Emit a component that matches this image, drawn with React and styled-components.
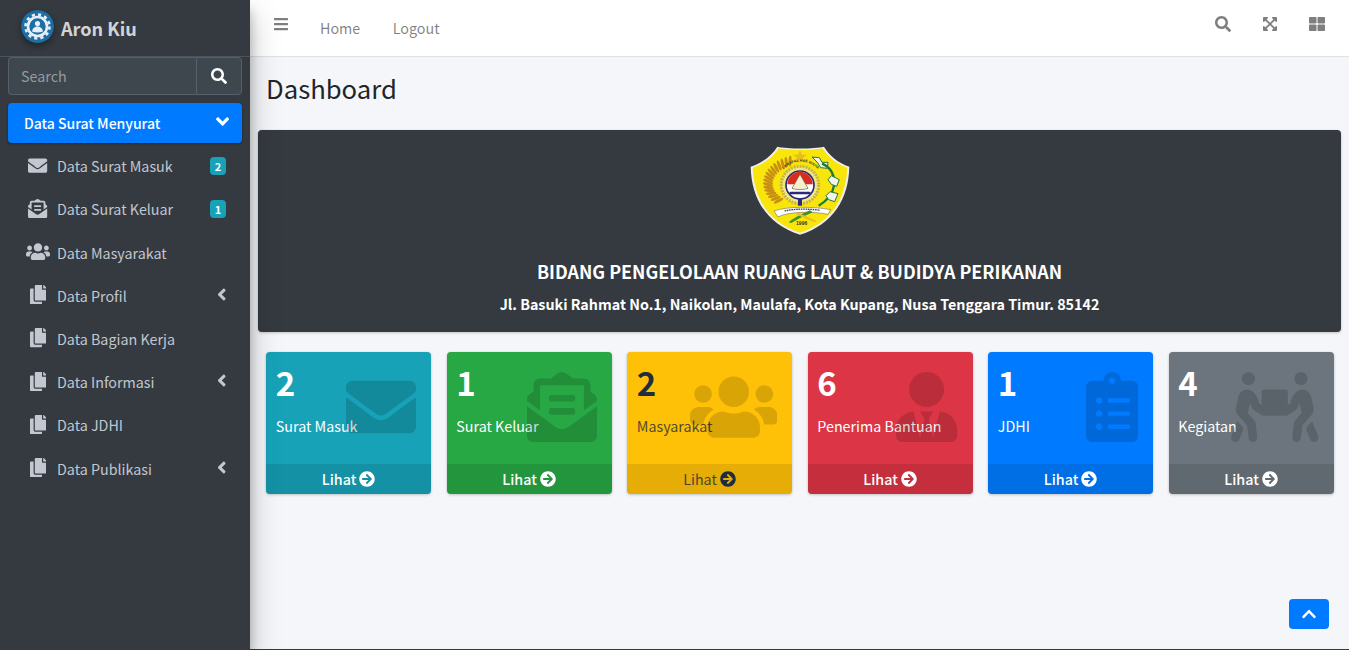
import React from 'react';
import styled, { createGlobalStyle } from 'styled-components';
import {
  FaEnvelope, FaEnvelopeOpenText, FaUsers, FaCopy, FaUserTie, FaClipboardList,
  FaPeopleCarry, FaArrowCircleRight, FaAngleLeft, FaAngleDown, FaExpandArrowsAlt,
  FaThLarge, FaBars, FaSearch, FaChevronUp,
} from 'react-icons/fa';

const FONT = '"Noto Sans CJK SC", "Noto Sans", sans-serif';

const Global = createGlobalStyle`
  * { box-sizing: border-box; }
  html, body { margin: 0; padding: 0; height: 100%; overflow: hidden; }
  body { font-family: ${FONT}; font-size: 14.3px; line-height: 24px; background: #f4f6f9; color: #212529; }
  svg[viewBox="0 0 640 512"] { width: 1.25em; }
  svg[viewBox="0 0 448 512"] { width: .875em; }
  svg[viewBox="0 0 384 512"] { width: .75em; }
  svg[viewBox="0 0 320 512"] { width: .625em; }
  svg[viewBox="0 0 256 512"] { width: .5em; }
`;

const Shell = styled.div`
  display: flex;
  height: 650px;
  width: 1349px;
  overflow: hidden;
`;

const Sidebar = styled.aside`
  flex: 0 0 250px;
  width: 250px;
  min-width: 0;
  background: #343a40;
  position: relative;
  z-index: 2;
  box-shadow: 0 14px 28px rgba(0,0,0,.25), 0 10px 10px rgba(0,0,0,.22);
`;

const Brand = styled.div`
  display: flex;
  align-items: center;
  height: 57px;
  padding: 0 0 4px 21px;
  gap: 7px;
  border-bottom: 1px solid #4b545c;
`;

const BrandText = styled.span`
  font-size: 18.1px;
  font-weight: 700;
  color: rgba(255,255,255,.8);
  line-height: 28px;
  margin-top: 3px;
`;

const LogoBadge = styled.svg`
  width: 33px;
  height: 33px;
  border-radius: 50%;
  box-shadow: 0 3px 6px rgba(0,0,0,.16), 0 3px 6px rgba(0,0,0,.23);
`;

const SearchRow = styled.form`
  display: flex;
  margin: 0 8px 8px;
  height: 38px;
`;

const SearchInput = styled.input`
  flex: 1;
  width: 100px;
  min-width: 0;
  background: #3f474e;
  border: 1px solid #56606a;
  border-right: 0;
  border-radius: 4px 0 0 4px;
  padding: 0 12px;
  font: 14.3px/24px ${FONT};
  color: #fff;
  outline: 0;
  &::placeholder { color: #939ba2; opacity: 1; }
`;

const SearchButton = styled.button`
  flex: 0 0 46px;
  display: flex;
  align-items: center;
  justify-content: center;
  padding: 0;
  background: #3f474e;
  border: 1px solid #56606a;
  border-radius: 0 4px 4px 0;
  color: #fff;
  font-size: 16px;
`;

const Nav = styled.nav`
  display: flex;
  flex-direction: column;
  gap: 3.2px;
  padding: 0 8px;
`;

const NavHead = styled.div`
  display: flex;
  align-items: center;
  justify-content: space-between;
  height: 40px;
  padding: 0 13px 0 16px;
  border-radius: 4px;
  background: #007bff;
  color: #fff;
  font-size: 14px;
  font-weight: 500;
  box-shadow: 0 1px 3px rgba(0,0,0,.12), 0 1px 2px rgba(0,0,0,.24);
  svg { font-size: 21px; height: 21px; margin-top: -4px; }
`;

const NavItem = styled.a`
  display: grid;
  grid-template-columns: 26px 1fr auto;
  column-gap: 6px;
  align-items: center;
  height: 40px;
  padding: 0 16px 0 17px;
  color: #c2c7d0;
`;

const NavIcon = styled.span`
  display: flex;
  justify-content: center;
  align-items: center;
  font-size: 19.2px;
  height: 24px;
  margin-top: -2px;
`;

const Badge = styled.span`
  background: #17a2b8;
  color: #fff;
  font-size: 11px;
  font-weight: 700;
  line-height: 18px;
  width: 16px;
  height: 18px;
  border-radius: 4px;
  text-align: center;
  margin-top: -1px;
`;

const Caret = styled.span`
  display: flex;
  font-size: 19px;
  margin-top: -3px;
`;

const Main = styled.div`
  flex: 1;
  min-width: 0;
  display: flex;
  flex-direction: column;
  border-bottom: 1px solid #343a40;
`;

const Topbar = styled.header`
  display: flex;
  align-items: center;
  height: 57px;
  flex: 0 0 57px;
  background: #fff;
  border-bottom: 1px solid #dee2e6;
  padding: 0 9px 0 24px;
`;

const TopIcon = styled.span`
  display: flex;
  justify-content: center;
  width: 47px;
  font-size: 16px;
  color: rgba(0,0,0,.5);
  margin-top: -9px;
`;

const MenuIcon = styled(TopIcon)`
  width: 14px;
  margin-right: 32px;
`;

const TopLink = styled.a`
  color: rgba(0,0,0,.5);
  margin-right: 32.5px;
`;

const Spacer = styled.div`
  flex: 1;
`;

const Content = styled.main`
  flex: 1;
  padding: 0 8px;
`;

const PageTitle = styled.h1`
  margin: 0;
  padding: 14px 8px 0;
  height: 73px;
  font-size: 25.7px;
  line-height: 34px;
  font-weight: 400;
  color: #212529;
`;

const Banner = styled.section`
  height: 202px;
  background: #343a40;
  border-radius: 4px;
  color: #fff;
  display: flex;
  flex-direction: column;
  align-items: center;
  padding-top: 15px;
  box-shadow: 0 0 1px rgba(0,0,0,.13), 0 1px 3px rgba(0,0,0,.2);
`;

const BannerTitle = styled.div`
  margin-top: 21px;
  font-size: 17.87px;
  line-height: 30px;
  font-weight: 700;
`;

const BannerAddress = styled.div`
  margin-top: 3px;
  font-size: 14.3px;
  line-height: 30px;
  font-weight: 700;
`;

const Seal = styled.svg`
  width: 100px;
  height: 90px;
  display: block;
`;

const Grid = styled.div`
  display: grid;
  grid-template-columns: repeat(6, 1fr);
  margin-top: 20px;
`;

const Col = styled.div`
  padding: 0 7.5px 0 8px;
  min-width: 0;
`;

const Box = styled.div`
  position: relative;
  height: 142px;
  display: flex;
  flex-direction: column;
  border-radius: 4px;
  overflow: hidden;
  background: ${p => p.$bg};
  color: ${p => p.$fg};
  box-shadow: 0 0 1px rgba(0,0,0,.13), 0 1px 3px rgba(0,0,0,.2);
`;

const BoxInner = styled.div`
  flex: 1;
  padding: 9px 10px 10px 9.8px;
`;

const BoxValue = styled.h3`
  margin: 0 0 11px;
  font-size: 33px;
  line-height: 42px;
  font-weight: 700;
`;

const BoxLabel = styled.p`
  margin: 0;
  opacity: ${p => p.$dim ? .8 : 1};
  line-height: 24px;
`;

const BoxIcon = styled.span`
  position: absolute;
  top: 20px;
  right: 15px;
  display: flex;
  font-size: 70px;
  color: rgba(0,0,0,.15);
`;

const BoxFooter = styled.a`
  flex: 0 0 30px;
  display: flex;
  align-items: center;
  justify-content: center;
  gap: 3px;
  background: rgba(0,0,0,.1);
  color: ${p => p.$fg};
  svg { font-size: 16px; }
`;

const FooterLabel = styled.span`
  opacity: ${p => p.$dim ? .8 : 1};
  font-weight: ${p => p.$dim ? 400 : 500};
`;

const ScrollTop = styled.button`
  position: fixed;
  right: 20px;
  bottom: 21px;
  width: 40px;
  height: 30px;
  display: flex;
  align-items: center;
  justify-content: center;
  padding: 0;
  border: 0;
  border-radius: 4px;
  background: #007bff;
  color: #fff;
  font-size: 16px;
`;

const items = [
  { label: 'Data Surat Masuk', icon: <FaEnvelope />, badge: '2' },
  { label: 'Data Surat Keluar', icon: <FaEnvelopeOpenText />, badge: '1' },
  { label: 'Data Masyarakat', icon: <FaUsers /> },
  { label: 'Data Profil', icon: <FaCopy />, caret: true },
  { label: 'Data Bagian Kerja', icon: <FaCopy /> },
  { label: 'Data Informasi', icon: <FaCopy />, caret: true },
  { label: 'Data JDHI', icon: <FaCopy /> },
  { label: 'Data Publikasi', icon: <FaCopy />, caret: true },
];

const boxes = [
  { value: '2', label: 'Surat Masuk', bg: '#17a2b8', fg: '#fff', icon: <FaEnvelope /> },
  { value: '1', label: 'Surat Keluar', bg: '#28a745', fg: '#fff', icon: <FaEnvelopeOpenText /> },
  { value: '2', label: 'Masyarakat', bg: '#ffc107', fg: '#1f2d3d', icon: <FaUsers />, dim: true },
  { value: '6', label: 'Penerima Bantuan', bg: '#dc3545', fg: '#fff', icon: <FaUserTie /> },
  { value: '1', label: 'JDHI', bg: '#007bff', fg: '#fff', icon: <FaClipboardList /> },
  { value: '4', label: 'Kegiatan', bg: '#6c757d', fg: '#fff', icon: <FaPeopleCarry /> },
];

const wheat = Array.from({ length: 17 }, (_, i) => {
  const deg = -108 - (i / 16) * 120;
  const a = (deg * Math.PI) / 180;
  return { x: 300 + 96 * Math.cos(a), y: 145 + 70 * Math.sin(a), deg };
});

const AppLogo = () => (
  <LogoBadge viewBox="0 0 33 33">
    <circle cx="16.5" cy="16.5" r="16.5" fill="#1c6ea4" />
    <g fill="none" stroke="#e8eef4">
      <circle cx="16.5" cy="16.5" r="9.5" strokeWidth="2.6" />
      <circle cx="16.5" cy="16.5" r="12" strokeWidth="2.6" strokeDasharray="3.2 3.1" />
    </g>
    <circle cx="16.5" cy="13.6" r="2.6" fill="#e8eef4" />
    <path d="M11 21.5c.6-3.6 3-5 5.5-5s4.900 1.400 5.500 5c-3.400 1.200-7.600 1.200-11 0z" fill="#e8eef4" />
  </LogoBadge>
);

const SealLogo = () => (
  <Seal viewBox="150 30 300 270">
    <defs>
      <path id="seal-arc" d="M232 150a70 70 0 0 1 140 0" />
    </defs>
    <path d="M232 35C262 42 342 42 372 35C388 62 415 84 448 95C446 190 400 268 300 299C200 268 154 190 152 95C185 84 216 62 232 35z" fill="#f0f0ea" />
    <path d="M236 40C265 47 339 47 368 40C384 66 410 88 442 98C438 188 396 262 300 293C204 262 162 188 158 98C190 88 220 66 236 40z" fill="#f8e50c" />
    <path d="M300 46l6 13h15l-12 10 5 15-14-9-14 9 5-15-12-10h15z" fill="#e9bd22" />
    {wheat.map((w, i) => (
      <ellipse key={i} cx={w.x} cy={w.y} rx="16" ry="4.500" fill="#c88f14" transform={`rotate(${w.deg + 20} ${w.x} ${w.y})`} />
    ))}
    <circle cx="300" cy="150" r="56" fill="#f2e880" stroke="#c9b04a" strokeWidth="9" strokeDasharray="6 3" />
    <text fontSize="11" fontWeight="700" fill="#3a3a2a" fontFamily="Liberation Sans, sans-serif" textAnchor="middle">
      <textPath href="#seal-arc" startOffset="50%">LAMAFAL HAE BISHA</textPath>
    </text>
    <circle cx="300" cy="150" r="42" fill="#fff" stroke="#2b2a78" strokeWidth="5" />
    <path d="M262 148a38 38 0 0 1 76 0z" fill="#d92b1e" />
    <path d="M300 118l24 42c-12 5-36 5-48 0z" fill="#f7f0d0" stroke="#6b5a24" strokeWidth="2" />
    <rect x="268" y="170" width="64" height="8" rx="4" fill="#2b2a78" />
    <rect x="294" y="190" width="12" height="22" fill="#2b2a78" />
    <path d="M336 66l22 2 8 14 18 0-2 18-20-2-10-16z" fill="#f4f4ee" stroke="#1d7a37" strokeWidth="3" />
    <path d="M366 86c26 10 40 36 36 66-4 26-22 46-46 60" fill="none" stroke="#1d7a37" strokeWidth="7" />
    <path d="M394 122l24 12-8 20-16-6-10-14z" fill="#f4f4ee" stroke="#1d7a37" strokeWidth="3" />
    <path d="M390 170l24 6-10 24-18-6-8-12z" fill="#f4f4ee" stroke="#1d7a37" strokeWidth="3" />
    <path d="M222 228C260 214 340 214 392 224L384 238C340 228 262 230 234 246z" fill="#fff" stroke="#555" strokeWidth="1.5" />
    <path d="M254 228C280 221 330 221 360 226" fill="none" stroke="#444" strokeWidth="4" strokeDasharray="5 2" />
    <path d="M266 262C288 244 312 234 330 226L338 232C320 240 296 250 274 264z" fill="#3f8f2c" />
    <path d="M296 234L350 258L344 262L286 238z" fill="#e9bd22" />
    <text x="305" y="270" textAnchor="middle" fontSize="15" fontWeight="700" fill="#333" fontFamily="Liberation Sans, sans-serif">1996</text>
  </Seal>
);

export default function App() {
  return (
    <Shell>
      <Global />
      <Sidebar>
        <Brand>
          <AppLogo />
          <BrandText>Aron Kiu</BrandText>
        </Brand>
        <SearchRow>
          <SearchInput placeholder="Search" />
          <SearchButton type="button"><FaSearch /></SearchButton>
        </SearchRow>
        <Nav>
          <NavHead>
            Data Surat Menyurat
            <FaAngleDown />
          </NavHead>
          {items.map(it => (
            <NavItem key={it.label}>
              <NavIcon>{it.icon}</NavIcon>
              <span>{it.label}</span>
              {it.badge && <Badge>{it.badge}</Badge>}
              {it.caret && <Caret><FaAngleLeft /></Caret>}
            </NavItem>
          ))}
        </Nav>
      </Sidebar>
      <Main>
        <Topbar>
          <MenuIcon><FaBars /></MenuIcon>
          <TopLink>Home</TopLink>
          <TopLink>Logout</TopLink>
          <Spacer />
          <TopIcon><FaSearch /></TopIcon>
          <TopIcon><FaExpandArrowsAlt /></TopIcon>
          <TopIcon><FaThLarge /></TopIcon>
        </Topbar>
        <Content>
          <PageTitle>Dashboard</PageTitle>
          <Banner>
            <SealLogo />
            <BannerTitle>BIDANG PENGELOLAAN RUANG LAUT &amp; BUDIDYA PERIKANAN</BannerTitle>
            <BannerAddress>Jl. Basuki Rahmat No.1, Naikolan, Maulafa, Kota Kupang, Nusa Tenggara Timur. 85142</BannerAddress>
          </Banner>
          <Grid>
            {boxes.map(b => (
              <Col key={b.label}>
                <Box $bg={b.bg} $fg={b.fg}>
                  <BoxInner>
                    <BoxValue>{b.value}</BoxValue>
                    <BoxLabel $dim={b.dim}>{b.label}</BoxLabel>
                  </BoxInner>
                  <BoxIcon>{b.icon}</BoxIcon>
                  <BoxFooter $fg={b.fg}>
                    <FooterLabel $dim={b.dim}>Lihat</FooterLabel>
                    <FaArrowCircleRight />
                  </BoxFooter>
                </Box>
              </Col>
            ))}
          </Grid>
        </Content>
      </Main>
      <ScrollTop><FaChevronUp /></ScrollTop>
    </Shell>
  );
}
